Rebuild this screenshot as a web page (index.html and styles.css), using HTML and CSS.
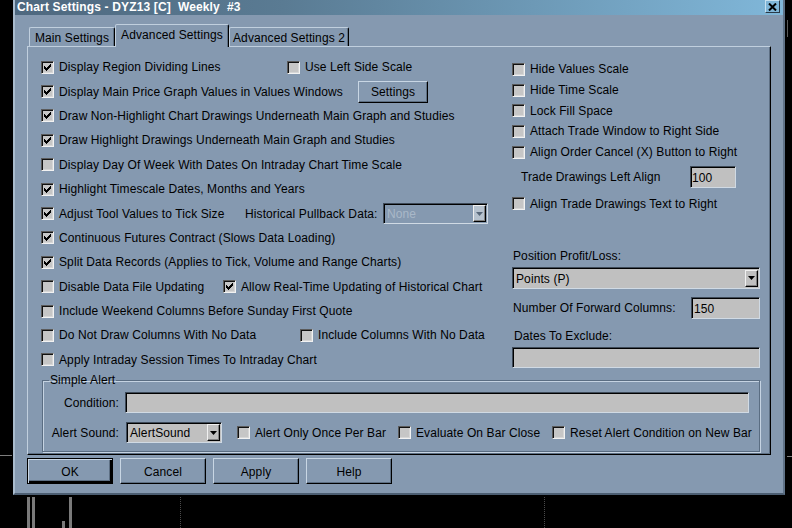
FILE: index.html
```html
<!DOCTYPE html>
<html lang="en">
<head>
    <meta charset="UTF-8">
    <title>Chart Settings</title>
    <link rel="stylesheet" href="styles.css">
</head>
<body>
<div class="screen">
    <div class="edge edge-left"><div class="tick tick-left"></div></div>

    <div class="dialog">
        <div class="titlebar">
            <span class="title">Chart Settings - DYZ13 [C]&nbsp; Weekly&nbsp; #3</span>
            <span class="close-btn">
                <svg width="9" height="8" viewBox="0 0 9 8"><path d="M1 0.5 L8 7.5 M8 0.5 L1 7.5" stroke="#000" stroke-width="2" fill="none"/></svg>
            </span>
        </div>

        <div class="tabs">
            <div class="tab tab-main">Main Settings</div>
            <div class="tab tab-adv active">Advanced Settings</div>
            <div class="tab tab-adv2">Advanced Settings 2</div>
        </div>

        <div class="panel">
            <div class="columns">
                <div class="col-left">
                    <div class="row">
                        <label class="check w246"><span class="cb on"><svg width="7" height="7" viewBox="0 0 7 7"><polygon points="0,2 2,4 6,0 7,0 7,2.5 2.5,7 2,7 0,5"/></svg></span>Display Region Dividing Lines</label>
                        <label class="check"><span class="cb"></span>Use Left Side Scale</label>
                    </div>
                    <div class="row">
                        <label class="check w317"><span class="cb on"><svg width="7" height="7" viewBox="0 0 7 7"><polygon points="0,2 2,4 6,0 7,0 7,2.5 2.5,7 2,7 0,5"/></svg></span>Display Main Price Graph Values in Values Windows</label>
                        <span class="btn btn-settings">Settings</span>
                    </div>
                    <div class="row">
                        <label class="check"><span class="cb on"><svg width="7" height="7" viewBox="0 0 7 7"><polygon points="0,2 2,4 6,0 7,0 7,2.5 2.5,7 2,7 0,5"/></svg></span>Draw Non-Highlight Chart Drawings Underneath Main Graph and Studies</label>
                    </div>
                    <div class="row">
                        <label class="check"><span class="cb on"><svg width="7" height="7" viewBox="0 0 7 7"><polygon points="0,2 2,4 6,0 7,0 7,2.5 2.5,7 2,7 0,5"/></svg></span>Draw Highlight Drawings Underneath Main Graph and Studies</label>
                    </div>
                    <div class="row">
                        <label class="check"><span class="cb"></span>Display Day Of Week With Dates On Intraday Chart Time Scale</label>
                    </div>
                    <div class="row">
                        <label class="check"><span class="cb on"><svg width="7" height="7" viewBox="0 0 7 7"><polygon points="0,2 2,4 6,0 7,0 7,2.5 2.5,7 2,7 0,5"/></svg></span>Highlight Timescale Dates, Months and Years</label>
                    </div>
                    <div class="row">
                        <label class="check w204"><span class="cb on"><svg width="7" height="7" viewBox="0 0 7 7"><polygon points="0,2 2,4 6,0 7,0 7,2.5 2.5,7 2,7 0,5"/></svg></span>Adjust Tool Values to Tick Size</label>
                        <span class="pullback-label">Historical Pullback Data:</span>
                        <div class="select select-none disabled">
                            <span class="select-value">None</span>
                            <span class="select-arrow"><svg width="7" height="4" viewBox="0 0 7 4"><polygon points="0,0 7,0 3.5,4"/></svg></span>
                        </div>
                    </div>
                    <div class="row">
                        <label class="check"><span class="cb on"><svg width="7" height="7" viewBox="0 0 7 7"><polygon points="0,2 2,4 6,0 7,0 7,2.5 2.5,7 2,7 0,5"/></svg></span>Continuous Futures Contract (Slows Data Loading)</label>
                    </div>
                    <div class="row">
                        <label class="check"><span class="cb on"><svg width="7" height="7" viewBox="0 0 7 7"><polygon points="0,2 2,4 6,0 7,0 7,2.5 2.5,7 2,7 0,5"/></svg></span>Split Data Records (Applies to Tick, Volume and Range Charts)</label>
                    </div>
                    <div class="row">
                        <label class="check w182"><span class="cb"></span>Disable Data File Updating</label>
                        <label class="check"><span class="cb on"><svg width="7" height="7" viewBox="0 0 7 7"><polygon points="0,2 2,4 6,0 7,0 7,2.5 2.5,7 2,7 0,5"/></svg></span>Allow Real-Time Updating of Historical Chart</label>
                    </div>
                    <div class="row">
                        <label class="check"><span class="cb"></span>Include Weekend Columns Before Sunday First Quote</label>
                    </div>
                    <div class="row">
                        <label class="check w259"><span class="cb"></span>Do Not Draw Columns With No Data</label>
                        <label class="check"><span class="cb"></span>Include Columns With No Data</label>
                    </div>
                    <div class="row">
                        <label class="check"><span class="cb"></span>Apply Intraday Session Times To Intraday Chart</label>
                    </div>
                </div>

                <div class="col-right">
                    <div class="rrow"><label class="check"><span class="cb"></span>Hide Values Scale</label></div>
                    <div class="rrow"><label class="check"><span class="cb"></span>Hide Time Scale</label></div>
                    <div class="rrow"><label class="check"><span class="cb"></span>Lock Fill Space</label></div>
                    <div class="rrow"><label class="check"><span class="cb"></span>Attach Trade Window to Right Side</label></div>
                    <div class="rrow"><label class="check"><span class="cb"></span>Align Order Cancel (X) Button to Right</label></div>
                    <div class="trade-row">
                        <span class="trade-label">Trade Drawings Left Align</span>
                        <span class="input input-trade">100</span>
                    </div>
                    <div class="rrow align-row"><label class="check"><span class="cb"></span>Align Trade Drawings Text to Right</label></div>

                    <div class="field-label pl-label">Position Profit/Loss:</div>
                    <div class="select select-pl">
                        <span class="select-value">Points (P)</span>
                        <span class="select-arrow"><svg width="7" height="4" viewBox="0 0 7 4"><polygon points="0,0 7,0 3.5,4"/></svg></span>
                    </div>
                    <div class="fwd-row">
                        <span>Number Of Forward Columns:</span>
                        <span class="input input-fwd">150</span>
                    </div>
                    <div class="field-label dates-label">Dates To Exclude:</div>
                    <span class="input input-dates"></span>
                </div>
            </div>

            <fieldset class="alert-box">
                <legend>Simple Alert</legend>
                <div class="arow">
                    <span class="alabel">Condition:</span>
                    <span class="input input-cond"></span>
                </div>
                <div class="arow arow-sound">
                    <span class="alabel">Alert Sound:</span>
                    <div class="select select-sound">
                        <span class="select-value">AlertSound</span>
                        <span class="select-arrow"><svg width="7" height="4" viewBox="0 0 7 4"><polygon points="0,0 7,0 3.5,4"/></svg></span>
                    </div>
                    <label class="check w161 first-alert"><span class="cb"></span>Alert Only Once Per Bar</label>
                    <label class="check w154"><span class="cb"></span>Evaluate On Bar Close</label>
                    <label class="check"><span class="cb"></span>Reset Alert Condition on New Bar</label>
                </div>
            </fieldset>
        </div>

        <div class="buttons">
            <span class="btn btn-default">OK</span>
            <span class="btn">Cancel</span>
            <span class="btn">Apply</span>
            <span class="btn">Help</span>
        </div>
    </div>

    <div class="edge edge-right">
        <div class="mark"></div>
        <div class="tick tick-right"></div>
    </div>
</div>

<div class="chart">
    <div class="bar bar-1"></div>
    <div class="bar bar-2"></div>
    <div class="bar bar-3"></div>
    <div class="bar bar-4"></div>
    <div class="grid-line grid-1"></div>
    <div class="grid-line grid-2"></div>
</div>
</body>
</html>
```

FILE: styles.css
```css
body {
    margin: 0;
    width: 792px;
    height: 528px;
    overflow: hidden;
    background: #000;
    font-family: "Liberation Sans", Arial, sans-serif;
    font-size: 12px;
    letter-spacing: 0.1px;
    color: #000;
}
.screen {
    display: flex;
    height: 495px;
}
.edge {
    position: relative;
    background: #000;
}
.edge-left { width: 13px; }
.edge-right { width: 7px; }
.tick {
    position: absolute;
    height: 1px;
    background: #7d7d7d;
}
.tick-left { top: 455px; left: 0; width: 12px; }
.tick-right { top: 456px; left: 2px; width: 5px; }
.mark {
    position: absolute;
    top: 20px;
    left: 2px;
    width: 1px;
    height: 17px;
    background: #5a5a5a;
}

.dialog {
    width: 772px;
    box-sizing: border-box;
    background: #8599b0;
    border-left: 2px solid #a9bbcd;
    border-right: 2px solid #5f7287;
    border-bottom: 2px solid #4c5e72;
    display: flex;
    flex-direction: column;
}
.titlebar {
    height: 15px;
    flex: none;
    display: flex;
    justify-content: space-between;
    background: linear-gradient(to right, #4e687f, #5a7b93 35%, #80b7d9);
    padding: 0 3px 0 2px;
}
.title {
    color: #fff;
    font-weight: bold;
    letter-spacing: 0.15px;
    line-height: 14px;
}
.close-btn {
    width: 15px;
    height: 13px;
    box-sizing: border-box;
    border: 1px solid;
    border-color: #c6e0f0 #2b3a48 #2b3a48 #c6e0f0;
    display: flex;
    align-items: center;
    justify-content: center;
}

.tabs {
    height: 31px;
    flex: none;
    display: flex;
    align-items: flex-end;
    padding-left: 14px;
}
.tab {
    height: 19px;
    box-sizing: border-box;
    border: 1px solid;
    border-bottom: none;
    border-color: #c0cfde #000 transparent #c0cfde;
    border-radius: 2px 2px 0 0;
    box-shadow: inset -1px 0 #5d6f83;
    display: flex;
    align-items: center;
    justify-content: center;
    padding-top: 1px;
}
.tab-main { width: 86px; }
.tab-adv { width: 114px; }
.tab-adv2 { width: 120px; }
.tab.active {
    height: 23px;
    margin-bottom: -1px;
    position: relative;
    z-index: 1;
    background: #8599b0;
    padding-top: 0;
    padding-bottom: 2px;
}

.panel {
    flex: none;
    margin: 0 12px;
    height: 409px;
    box-sizing: border-box;
    border-top: 1px solid #c0cfde;
    border-left: 1px solid #c0cfde;
    border-right: 1px solid #000;
    border-bottom: 1px solid #000;
    box-shadow: inset -1px -1px #5d6f83;
    padding: 8px 0 0 13px;
}
.columns { display: flex; }
.col-left { width: 471px; }
.col-right {
    width: 248px;
    padding-top: 4px;
    display: flex;
    flex-direction: column;
}
.row {
    height: 24.4px;
    display: flex;
    align-items: center;
}
.rrow {
    height: 20.7px;
    display: flex;
    align-items: center;
}
.check {
    display: flex;
    align-items: center;
    gap: 5px;
    white-space: nowrap;
}
.w154 { width: 154px; }
.w161 { width: 161px; }
.w182 { width: 182px; }
.w204 { width: 204px; }
.w246 { width: 246px; }
.w259 { width: 259px; }
.w317 { width: 317px; }

.cb {
    flex: none;
    width: 13px;
    height: 13px;
    box-sizing: border-box;
    border: 1px solid;
    border-color: #5a5a5a #f2f2f2 #f2f2f2 #5a5a5a;
    box-shadow: inset 1px 1px #111, inset -1px -1px #d6d6d6;
    background: #c6c6c6;
    display: flex;
    align-items: center;
    justify-content: center;
}
.cb svg { fill: #000; shape-rendering: crispEdges; }

.btn {
    box-sizing: border-box;
    border: 1px solid;
    border-color: #c8d6e4 #000 #000 #c8d6e4;
    box-shadow: inset -1px -1px #5d6f83;
    display: flex;
    align-items: center;
    justify-content: center;
}
.btn-settings {
    width: 70px;
    height: 22px;
    padding-top: 1px;
}

.pullback-label { width: 138px; }
.select {
    box-sizing: border-box;
    background: #c0c0c0;
    border: 1px solid;
    border-color: #3e4a58 #d0dae4 #d0dae4 #3e4a58;
    box-shadow: inset 1px 1px #000;
    display: flex;
    align-items: center;
    justify-content: space-between;
    padding: 1px 1px 0 3px;
}
.select-arrow {
    width: 13px;
    height: 17px;
    box-sizing: border-box;
    background: #c0c0c0;
    border: 1px solid;
    border-color: #f0f0f0 #000 #000 #f0f0f0;
    box-shadow: inset -1px -1px #808080;
    display: flex;
    align-items: center;
    justify-content: center;
    margin-top: -1px;
}
.select-arrow svg { fill: #000; }
.select-none {
    width: 105px;
    height: 21px;
}
.disabled { background: #8599b0; color: #a9b8c8; }
.disabled .select-arrow { background: #b6c2ce; }
.disabled .select-arrow svg { fill: #59687a; }

.input {
    display: flex;
    align-items: center;
    box-sizing: border-box;
    background: #c0c0c0;
    border: 1px solid;
    border-color: #3e4a58 #d0dae4 #d0dae4 #3e4a58;
    box-shadow: inset 1px 1px #000;
    padding: 1px 0 0 2px;
}
.trade-row {
    margin-top: 4px;
    height: 22px;
    display: flex;
    align-items: center;
    padding-left: 9px;
}
.trade-label { width: 169px; }
.input-trade { width: 46px; height: 22px; padding-left: 1px; }
.align-row { margin-top: 5px; }
.field-label {
    height: 16px;
    line-height: 16px;
}
.pl-label { margin-top: 34px; padding-left: 1px; }
.select-pl {
    margin-top: 3px;
    width: 248px;
    height: 22px;
}
.fwd-row {
    margin-top: 8px;
    height: 22px;
    display: flex;
    align-items: center;
    justify-content: space-between;
    padding-left: 1px;
}
.input-fwd { width: 69px; height: 22px; }
.dates-label { margin-top: 9px; padding-left: 2px; }
.input-dates {
    margin-top: 3px;
    width: 248px;
    height: 21px;
}

.alert-box {
    margin: 1px 0 0 1px;
    width: 718px;
    box-sizing: border-box;
    padding: 5px 0 8px 0;
    border: 1px solid #5a6d82;
    box-shadow: inset 1px 1px #c5d3e2, 1px 1px #c5d3e2;
}
.alert-box legend {
    margin-left: 6px;
    padding: 0 1px;
    line-height: 14px;
}
.arow {
    display: flex;
    align-items: center;
}
.arow-sound { margin-top: 9px; }
.alabel {
    width: 76px;
    margin-right: 6px;
    text-align: right;
    flex: none;
}
.input-cond { width: 624px; height: 21px; }
.select-sound {
    margin-left: 1px;
    width: 96px;
    height: 21px;
}
.first-alert { margin-left: 15px; }

.buttons {
    flex: none;
    display: flex;
    gap: 7px;
    padding: 3px 0 0 12px;
}
.buttons .btn {
    width: 86px;
    height: 26px;
    padding-top: 1px;
}
.buttons .btn-default {
    border: 1px solid #000;
    box-shadow: inset 1px 1px #c8d6e4, inset -2px -2px #000, inset -3px -3px #5d6f83;
}

.chart {
    position: relative;
    height: 33px;
}
.bar {
    position: absolute;
    bottom: 0;
    background: #7a7a7a;
}
.bar-1 { left: 27px; width: 3px; top: 2px; }
.bar-2 { left: 32px; width: 3px; top: 2px; }
.bar-3 { left: 62px; width: 3px; top: 26px; }
.bar-4 { left: 69px; width: 3px; top: 2px; }
.grid-line {
    position: absolute;
    top: 2px;
    bottom: 0;
    border-left: 1px dotted #4a4a4a;
}
.grid-1 { left: 180px; }
.grid-2 { left: 544px; }
```
